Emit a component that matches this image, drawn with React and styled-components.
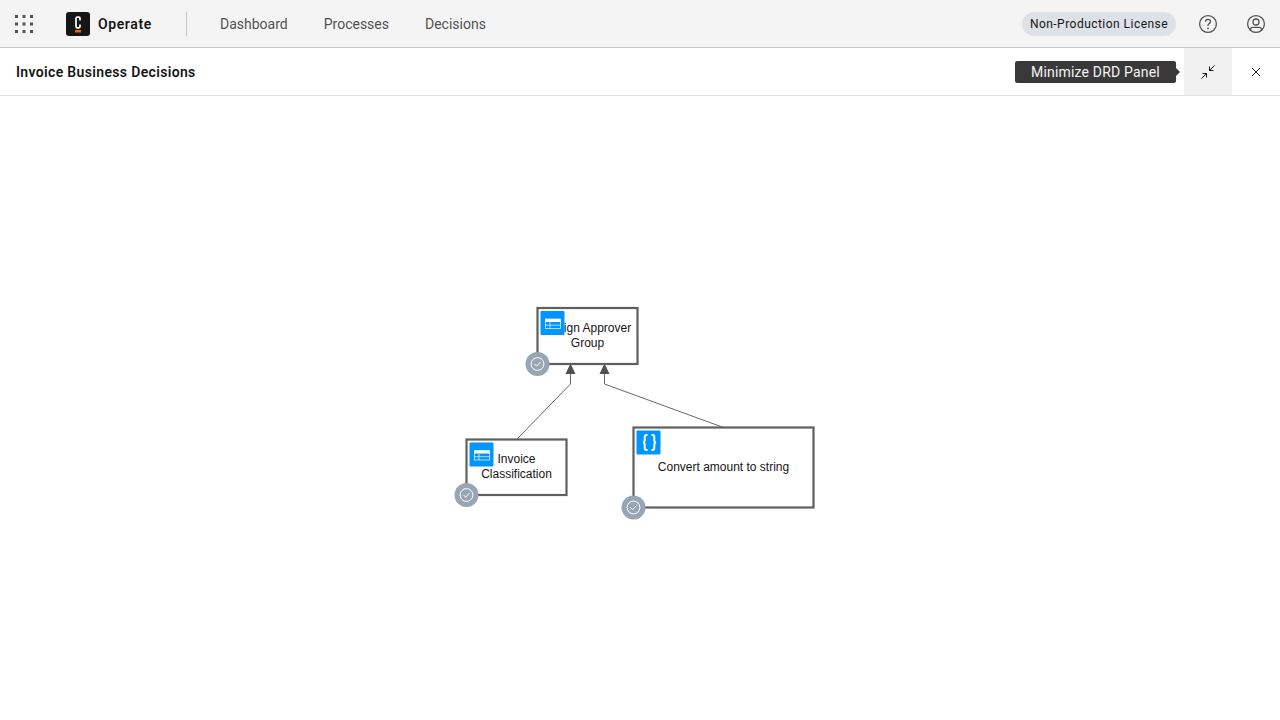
import React from 'react';
import styled, { createGlobalStyle } from 'styled-components';

const GlobalStyle = createGlobalStyle`
  html, body { margin: 0; padding: 0; height: 100%; background: #fff; overflow: hidden; }
  body { font-family: 'Roboto', 'Liberation Sans', sans-serif; color: #161616; }
  #root { height: 100%; }
`;

const Page = styled.div`
  display: flex;
  flex-direction: column;
  height: 720px;
`;

const Header = styled.header`
  display: flex;
  align-items: center;
  flex: 0 0 48px;
  box-sizing: border-box;
  background: #f4f4f4;
  border-bottom: 1px solid #c6c6c6;
`;

const IconButton = styled.button`
  display: flex;
  align-items: center;
  justify-content: center;
  width: 48px;
  height: 47px;
  padding: 0;
  border: 0;
  color: #525252;
  background: ${(p) => (p.$active ? '#f0f0f0' : 'transparent')};
`;

const Brand = styled.div`
  display: flex;
  align-items: center;
  gap: 8px;
  box-sizing: border-box;
  width: 121px;
  margin-left: 18px;
  height: 24px;
  border-right: 1px solid #c6c6c6;
  font-size: 14px;
  font-weight: 600;
  letter-spacing: 0.6px;
`;

const Nav = styled.nav`
  display: flex;
  gap: 36px;
  margin-left: 33px;
  font-size: 14px;
  color: #525252;
`;

const Spacer = styled.div`
  flex: 1;
`;

const License = styled.span`
  display: flex;
  align-items: center;
  justify-content: center;
  width: 154px;
  height: 24px;
  border-radius: 12px;
  background: #dde1e8;
  font-size: 12px;
  letter-spacing: 0.47px;
  color: #161616;
`;

const Actions = styled.div`
  display: flex;
  margin-left: 8px;
`;

const PanelBar = styled.div`
  display: flex;
  align-items: center;
  flex: 0 0 48px;
  box-sizing: border-box;
  padding-left: 16px;
  border-bottom: 1px solid #e0e0e0;
`;

const PanelTitle = styled.h1`
  flex: 1;
  margin: 0;
  font-size: 14px;
  font-weight: 600;
  letter-spacing: 0.34px;
`;

const ToolWrap = styled.div`
  position: relative;
  display: flex;
`;

const Tooltip = styled.div`
  position: absolute;
  top: 13px;
  right: 104px;
  box-sizing: border-box;
  width: 161px;
  height: 22px;
  padding-left: 16px;
  border-radius: 2px;
  background: #393939;
  color: #f4f4f4;
  font-size: 14px;
  line-height: 22px;
  letter-spacing: 0.18px;
  white-space: nowrap;

  &::after {
    content: '';
    position: absolute;
    top: 7px;
    right: -4px;
    border-top: 4px solid transparent;
    border-bottom: 4px solid transparent;
    border-left: 4px solid #393939;
  }
`;

const Canvas = styled.main`
  flex: 1;
  min-height: 0;
`;

const Diagram = styled.svg`
  display: block;
  width: 100%;
  height: 100%;
`;

const Label = styled.text`
  font-family: 'Liberation Sans', Arial, sans-serif;
  font-size: 12px;
  fill: #161616;
  text-anchor: middle;
`;

const Switcher = () => (
  <svg width="20" height="20" viewBox="0 0 20 20" fill="currentColor">
    {[1, 8.5, 16].flatMap((y) =>
      [1, 8.5, 16].map((x) => <rect key={`${x}-${y}`} x={x} y={y} width="3" height="3" />)
    )}
  </svg>
);

const Logo = () => (
  <svg width="24" height="24" viewBox="0 0 24 24">
    <rect width="24" height="24" rx="3" fill="#161616" />
    <path d="M14 8.5V6.4A1.2 1.2 0 0 0 12.8 5.2h-1.6A1.2 1.2 0 0 0 10 6.4v8.2a1.2 1.2 0 0 0 1.2 1.2h1.6a1.2 1.2 0 0 0 1.2-1.2v-2.1" fill="none" stroke="#fff" strokeWidth="1.7" />
    <rect x="9" y="18" width="6" height="2.5" fill="#fc5d0d" />
  </svg>
);

const Help = () => (
  <svg width="20" height="20" viewBox="0 0 20 20" fill="none" stroke="currentColor" strokeWidth="1.3">
    <circle cx="10" cy="10" r="8.4" />
    <path d="M7.5 7.7c0-1.5 1.1-2.4 2.5-2.4s2.5.9 2.5 2.2c0 1-.5 1.5-1.4 2.1-.8.5-1.1 1-1.1 1.9v.6" />
    <circle cx="10" cy="14.4" r=".95" fill="currentColor" stroke="none" />
  </svg>
);

const User = () => (
  <svg width="20" height="20" viewBox="0 0 20 20" fill="none" stroke="currentColor" strokeWidth="1.3">
    <circle cx="10" cy="10" r="8.4" />
    <circle cx="10" cy="8" r="3" />
    <path d="M4.6 16.2v-.7c0-1.2 1-2.1 2.2-2.1h6.4c1.2 0 2.2.9 2.2 2.1v.7" />
  </svg>
);

const Minimize = () => (
  <svg width="16" height="16" viewBox="0 0 16 16" fill="none" stroke="#161616" strokeWidth="1">
    <path d="M14.5 1.5 9.5 6.5M9.5 2.5v4h4M1.5 14.5l5-5M2.5 9.5h4v4" />
  </svg>
);

const Close = () => (
  <svg width="16" height="16" viewBox="0 0 16 16" fill="none" stroke="#161616" strokeWidth="1">
    <path d="M4 4l8 8M12 4l-8 8" />
  </svg>
);

const TableIcon = ({ x, y }) => (
  <g transform={`translate(${x} ${y})`}>
    <rect width="24" height="24" rx="1" fill="#0096ff" />
    <rect x="5" y="8" width="15" height="9.5" fill="none" stroke="#fff" strokeWidth="0.8" opacity="0.85" />
    <rect x="5" y="8" width="15" height="3" fill="#fff" />
    <path d="M5 14.2h15M9.5 11v6.5" stroke="#fff" strokeWidth="0.8" opacity="0.85" />
  </g>
);

const LiteralIcon = ({ x, y }) => (
  <g transform={`translate(${x} ${y})`}>
    <rect width="24" height="24" rx="1" fill="#0096ff" />
    <path d="M11 4.5H10.2C8.7 4.5 8.2 5.4 8.2 6.7v3.5c0 1-.5 1.6-1.7 1.8 1.2.2 1.7.8 1.7 1.8v3.5c0 1.3.5 2.2 2 2.2h.8M15 4.5h.8c1.5 0 2 .9 2 2.2v3.5c0 1 .5 1.6 1.7 1.8-1.2.2-1.7.8-1.7 1.8v3.5c0 1.3-.5 2.2-2 2.2H15" fill="none" stroke="#fff" strokeWidth="2" />
  </g>
);

const Badge = ({ x, y }) => (
  <g transform={`translate(${x} ${y})`}>
    <circle r="12" fill="#98a5b5" />
    <circle r="6.4" fill="none" stroke="#fff" strokeWidth="1" />
    <path d="M-3 0l2.1 2.2L3 -2" fill="none" stroke="#fff" strokeWidth="1" />
  </g>
);

const Arrow = ({ x }) => <path d={`M${x} 363.5l5 10.5h-10z`} fill="#505050" />;

const nodes = [
  { id: 'approver', x: 537.5, y: 308, w: 100, h: 56, icon: 'table', lines: [['ign Approver', 597.5, 332], ['Group', 587.5, 347]] },
  { id: 'classify', x: 466.5, y: 439.5, w: 100, h: 55.5, icon: 'table', lines: [['Invoice', 516.5, 463], ['Classification', 516.5, 478]] },
  { id: 'convert', x: 633.5, y: 427.5, w: 180, h: 80, icon: 'literal', lines: [['Convert amount to string', 723.5, 471]] },
];

export default function App() {
  return (
    <Page>
      <GlobalStyle />
      <Header>
        <IconButton><Switcher /></IconButton>
        <Brand><Logo />Operate</Brand>
        <Nav>
          <span>Dashboard</span>
          <span>Processes</span>
          <span>Decisions</span>
        </Nav>
        <Spacer />
        <License>Non-Production License</License>
        <Actions>
          <IconButton><Help /></IconButton>
          <IconButton><User /></IconButton>
        </Actions>
      </Header>
      <PanelBar>
        <PanelTitle>Invoice Business Decisions</PanelTitle>
        <ToolWrap>
          <Tooltip>Minimize DRD Panel</Tooltip>
          <IconButton $active><Minimize /></IconButton>
          <IconButton><Close /></IconButton>
        </ToolWrap>
      </PanelBar>
      <Canvas>
        <Diagram viewBox="0 96 1280 624">
          <path d="M516.5 439.5 570.5 384v-11M723.5 427.5 604.5 384v-11" fill="none" stroke="#404040" strokeWidth="0.8" />
          <Arrow x={570.5} />
          <Arrow x={604.5} />
          {nodes.map((n) => (
            <g key={n.id}>
              <rect x={n.x} y={n.y} width={n.w} height={n.h} fill="#fff" stroke="#5f5f5f" strokeWidth="2.2" />
              {n.lines.map(([t, x, y]) => <Label key={t} x={x} y={y}>{t}</Label>)}
              {n.icon === 'table' ? <TableIcon x={n.x + 3} y={n.y + 3} /> : <LiteralIcon x={n.x + 3} y={n.y + 3} />}
              <Badge x={n.x} y={n.y + n.h} />
            </g>
          ))}
        </Diagram>
      </Canvas>
    </Page>
  );
}
